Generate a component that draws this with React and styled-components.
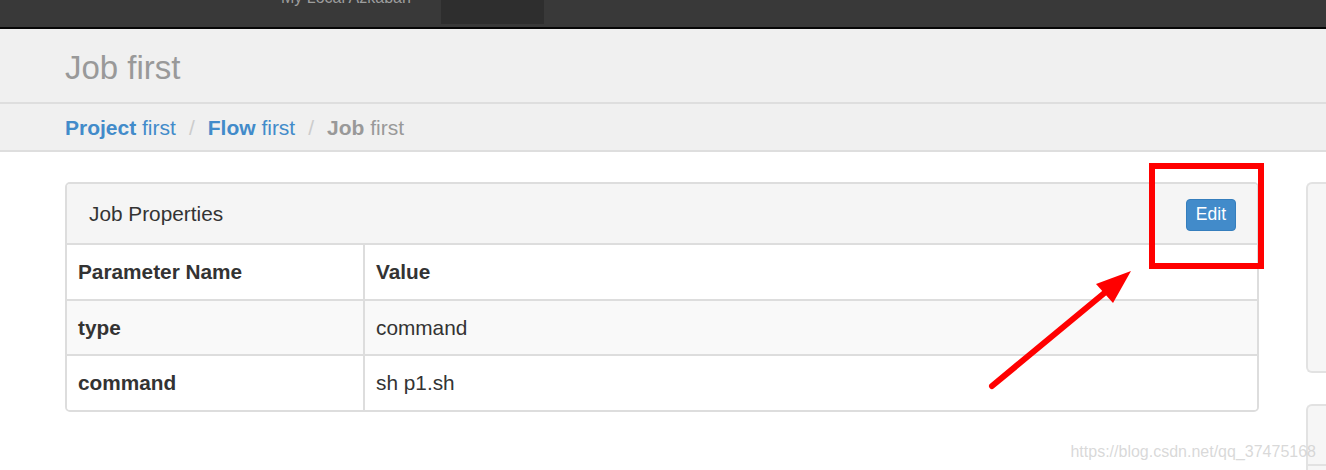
import styled, { createGlobalStyle } from "styled-components";

const GlobalStyle = createGlobalStyle`
    html, body {
        margin: 0;
        padding: 0;
        background: #fff;
        font-family: "Liberation Sans", Arial, sans-serif;
        color: #333;
    }
`

const Page = styled.div`
    position: relative;
    height: 470px;
    overflow: hidden;
`
const Navbar = styled.nav`
    height: 27px;
    background: #393939;
    border-bottom: 2px solid #060606;
    display: flex;
    align-items: flex-start;
    padding-left: 281px;
    gap: 30px;
    overflow: hidden;
`
const Brand = styled.span`
    margin-top: -10px;
    font-size: 16px;
    line-height: 16px;
    color: #9d9d9d;
    white-space: nowrap;
`
const NavTab = styled.span`
    width: 103px;
    height: 24px;
    background: #2e2e2e;
`
const Header = styled.header`
    height: 75px;
    box-sizing: border-box;
    padding: 4px 0 0 65px;
    background: #f0f0f0;
    border-bottom: 2px solid #dedede;
    display: flex;
    align-items: center;
`
const Title = styled.h1`
    margin: 0;
    font-size: 33px;
    font-weight: 400;
    color: #999;
`
const Breadcrumbs = styled.div`
    height: 48px;
    box-sizing: border-box;
    padding: 2px 0 0 65px;
    background: #f0f0f0;
    border-bottom: 2px solid #dedede;
    display: flex;
    align-items: center;
    font-size: 21px;
`
const Crumb = styled.span`
    color: ${p => (p.$active ? "#999" : "#428bca")};
    b { font-weight: 700; }
`
const Sep = styled.span`
    color: #ccc;
    padding: 0 13px;
`
const Main = styled.main`
    display: grid;
    grid-template-columns: 1194px 1fr;
    align-items: start;
    gap: 47px;
    padding: 30px 0 0 65px;
`
const Panel = styled.section`
    border: 2px solid #ddd;
    border-radius: 5px;
    overflow: hidden;
    background: #fff;
`
const PanelHeading = styled.div`
    height: 59px;
    background: #f5f5f5;
    border-bottom: 2px solid #ddd;
    display: flex;
    align-items: center;
    justify-content: space-between;
    padding: 0 21px 0 22px;
`
const PanelTitle = styled.h3`
    margin: 0;
    font-size: 20.8px;
    font-weight: 400;
    color: #333;
`
const EditButton = styled.button`
    height: 32px;
    padding: 0 9px;
    margin-top: 2px;
    background: #428bca;
    border: 1px solid #357ebd;
    border-radius: 4px;
    color: #fff;
    font-family: "Liberation Sans", Arial, sans-serif;
    font-size: 17.5px;
`
const Table = styled.table`
    width: 100%;
    border-collapse: collapse;
    font-size: 20.8px;
    color: #333;
`
const Row = styled.tr`
    height: 55px;
    background: ${p => (p.$striped ? "#f9f9f9" : "#fff")};
    & + & { border-top: 2px solid #ddd; }
`
const Cell = styled.td`
    padding: 0 11px;
    font-weight: ${p => (p.$bold ? 700 : 400)};
    width: ${p => (p.$first ? "274px" : "auto")};
    & + & { border-left: 2px solid #ddd; }
`
const Side = styled.aside`
    display: flex;
    flex-direction: column;
    gap: 31px;
`
const SidePanel = styled.div`
    height: ${p => p.$height}px;
    background: #f6f6f6;
    border: 2px solid #e2e2e2;
    border-right: none;
    border-radius: 6px 0 0 6px;
    border-bottom-left-radius: ${p => (p.$open ? 0 : 6)}px;
`
const SideHeadLine = styled.div`
    height: 58px;
    border-bottom: 2px solid #e2e2e2;
`
const Watermark = styled.div`
    position: absolute;
    right: 10px;
    top: 443px;
    font-size: 16px;
    color: rgba(200, 200, 200, 0.7);
    white-space: nowrap;
`
const Highlight = styled.div`
    position: absolute;
    left: 1149px;
    top: 163px;
    width: 103px;
    height: 94px;
    border: 6px solid #ff0000;
`
const Overlay = styled.svg`
    position: absolute;
    left: 0;
    top: 0;
    pointer-events: none;
`

const rows = [
    { name: "type", value: "command" },
    { name: "command", value: "sh p1.sh" },
];

function App() {
    return (
        <Page>
            <GlobalStyle />
            <Navbar>
                <Brand>My Local Azkaban</Brand>
                <NavTab />
            </Navbar>
            <Header>
                <Title>Job first</Title>
            </Header>
            <Breadcrumbs>
                <Crumb><b>Project</b> first</Crumb>
                <Sep>/</Sep>
                <Crumb><b>Flow</b> first</Crumb>
                <Sep>/</Sep>
                <Crumb $active><b>Job</b> first</Crumb>
            </Breadcrumbs>
            <Main>
                <Panel>
                    <PanelHeading>
                        <PanelTitle>Job Properties</PanelTitle>
                        <EditButton>Edit</EditButton>
                    </PanelHeading>
                    <Table>
                        <tbody>
                            <Row>
                                <Cell $bold $first>Parameter Name</Cell>
                                <Cell $bold>Value</Cell>
                            </Row>
                            {rows.map((r, i) => (
                                <Row key={r.name} $striped={i % 2 === 0}>
                                    <Cell $bold $first>{r.name}</Cell>
                                    <Cell>{r.value}</Cell>
                                </Row>
                            ))}
                        </tbody>
                    </Table>
                </Panel>
                <Side>
                    <SidePanel $height={187} />
                    <SidePanel $height={90} $open>
                        <SideHeadLine />
                    </SidePanel>
                </Side>
            </Main>
            <Highlight />
            <Overlay width="1326" height="470" viewBox="0 0 1326 470">
                <line x1="992" y1="386" x2="1108" y2="290" stroke="#ff0000" strokeWidth="6" strokeLinecap="round" />
                <polygon points="1131,271 1096,284 1113,303" fill="#ff0000" />
            </Overlay>
            <Watermark>https://blog.csdn.net/qq_37475168</Watermark>
        </Page>
    );
}

export default App;
